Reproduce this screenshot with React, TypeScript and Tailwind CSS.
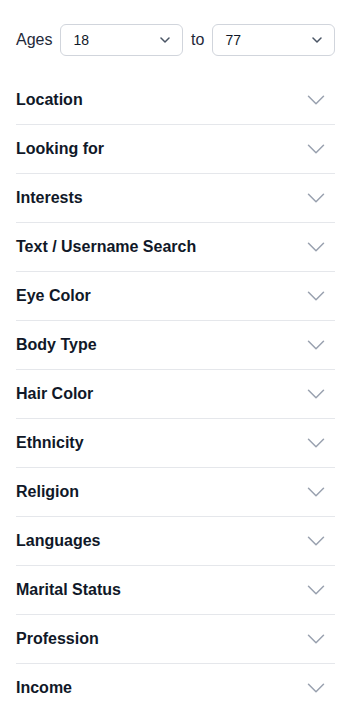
const filters = [
  "Location",
  "Looking for",
  "Interests",
  "Text / Username Search",
  "Eye Color",
  "Body Type",
  "Hair Color",
  "Ethnicity",
  "Religion",
  "Languages",
  "Marital Status",
  "Profession",
  "Income",
];

function SmallChevron() {
  return (
    <svg width="10" height="6" viewBox="0 0 10 6" fill="none" className="text-gray-600">
      <path d="M1 1l4 4 4-4" stroke="currentColor" strokeWidth="1.5" strokeLinecap="round" strokeLinejoin="round" />
    </svg>
  );
}

function AgeSelect({ value }: { value: string }) {
  return (
    <div className="flex-1 h-8 flex items-center justify-between px-3 border border-gray-300 rounded-md bg-white text-sm text-gray-900">
      <span>{value}</span>
      <SmallChevron />
    </div>
  );
}

export default function App() {
  return (
    <div className="min-h-screen bg-white px-4 pt-6 font-['Liberation_Sans',Arial,sans-serif]">
      <div className="flex items-center gap-2 h-8">
        <span className="text-base text-gray-800">Ages</span>
        <AgeSelect value="18" />
        <span className="text-base text-gray-800">to</span>
        <AgeSelect value="77" />
      </div>
      <div className="mt-5">
        {filters.map((f) => (
          <div key={f} className="h-[49px] flex items-center justify-between border-b border-gray-200">
            <span className="text-base font-bold text-gray-900">{f}</span>
            <svg width="24" height="24" viewBox="0 0 24 24" fill="none" className="mr-[7px] text-gray-400">
              <path d="M19.5 8.25l-7.5 7.5-7.5-7.5" stroke="currentColor" strokeWidth="1.5" strokeLinecap="round" strokeLinejoin="round" />
            </svg>
          </div>
        ))}
      </div>
    </div>
  );
}
